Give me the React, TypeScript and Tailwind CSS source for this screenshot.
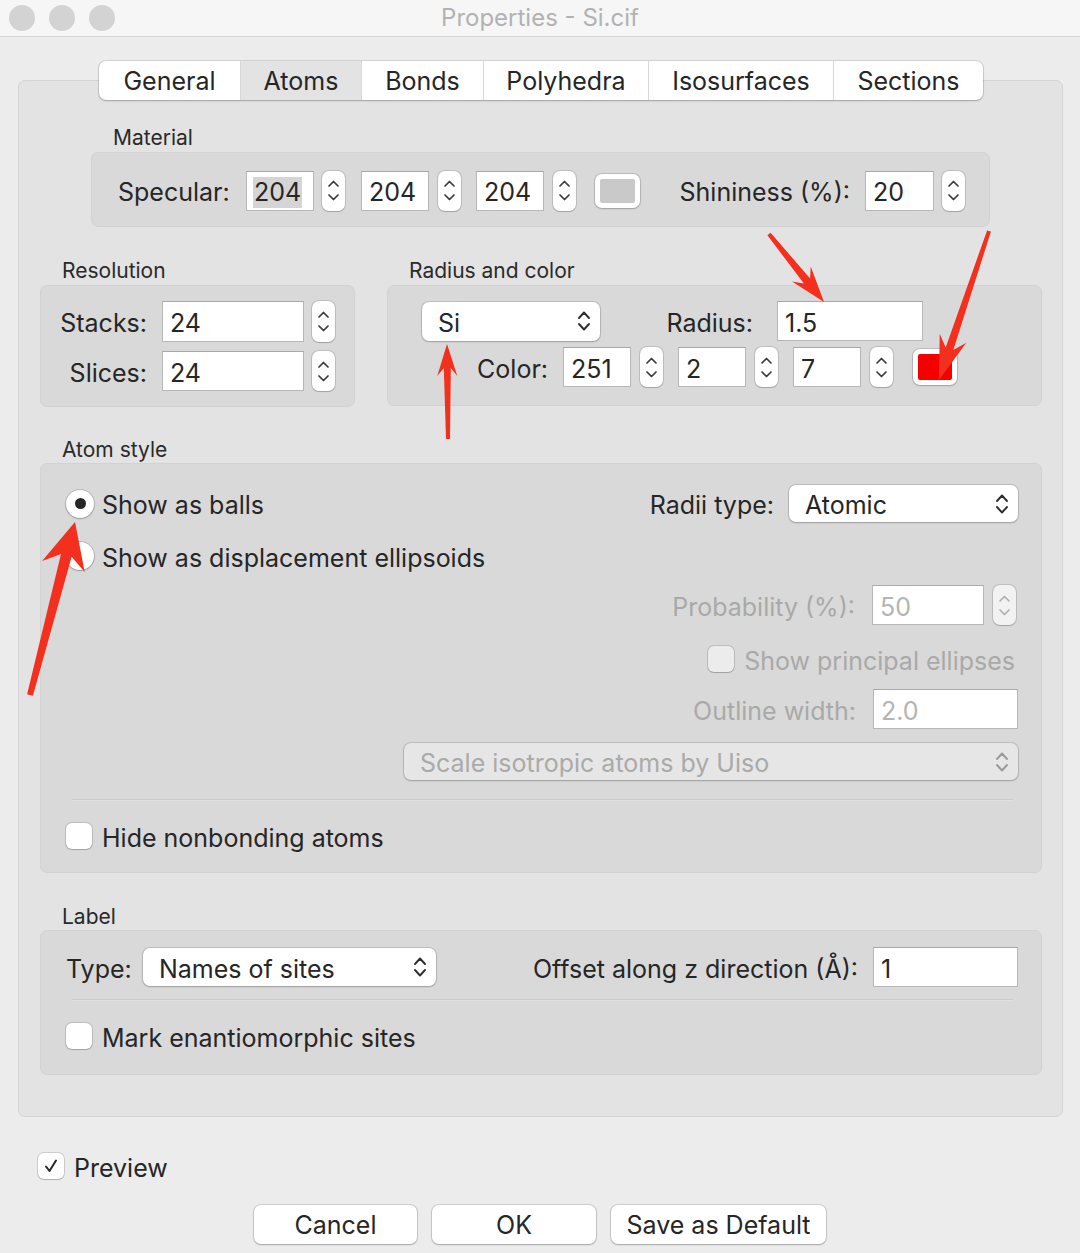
import React from "react";

type FieldProps = {
  w: number;
  h?: number;
  value: string;
  disabled?: boolean;
  selected?: boolean;
};

// 25px text, nudged down a little to sit like the system font does
const T = "text-[25px] leading-none pt-[4px]";

const Chevron = ({ up }: { up?: boolean }) => (
  <svg width="11" height="7" viewBox="0 0 11 7" fill="none">
    <path
      d={up ? "M1 6 L5.5 1.5 L10 6" : "M1 1 L5.5 5.5 L10 1"}
      stroke="currentColor"
      strokeWidth="1.7"
      strokeLinecap="round"
      strokeLinejoin="round"
    />
  </svg>
);

const Stepper = ({ h = 40, disabled }: { h?: number; disabled?: boolean }) => (
  <div
    className={`flex flex-col items-center justify-center gap-[7px] rounded-[7px] w-[23px] shadow-[0_0_0_1px_rgba(0,0,0,0.12),0_1px_1px_rgba(0,0,0,0.15)] ${
      disabled ? "bg-[#f2f2f2] text-[#b0b0b0]" : "bg-white text-[#3a3a3a]"
    }`}
    style={{ height: h }}
  >
    <Chevron up />
    <Chevron />
  </div>
);

const Field = ({ w, h = 40, value, disabled, selected }: FieldProps) => (
  <div
    className={`flex items-center bg-white border border-[#b7b7b7] border-t-[#a9a9a9] pl-[6px] ${T} ${
      disabled ? "text-[#b4b4b4]" : "text-[#262626]"
    }`}
    style={{ width: w, height: h }}
  >
    <span className={selected ? "bg-[#d5d5d5] px-[1px] py-[3px]" : "px-[1px]"}>{value}</span>
  </div>
);

const Popup = ({ w, h = 38, value, disabled }: FieldProps) => (
  <div
    className={`flex items-center justify-between rounded-[7px] pl-[16px] pr-[9px] text-[25px] leading-none shadow-[0_0_0_1px_rgba(0,0,0,0.12),0_1px_2px_rgba(0,0,0,0.18)] ${
      disabled ? "bg-[#e6e6e6] text-[#aaaaaa]" : "bg-white text-[#262626]"
    }`}
    style={{ width: w, height: h }}
  >
    <span className="pt-[4px]">{value}</span>
    <svg width="14" height="24" viewBox="0 0 14 24" fill="none" className={disabled ? "text-[#9a9a9a]" : "text-[#2e2e2e]"}>
      <path d="M2 9 L7 3.5 L12 9" stroke="currentColor" strokeWidth="1.9" strokeLinecap="round" strokeLinejoin="round" />
      <path d="M2 15 L7 20.5 L12 15" stroke="currentColor" strokeWidth="1.9" strokeLinecap="round" strokeLinejoin="round" />
    </svg>
  </div>
);

const Checkbox = ({ checked, disabled }: { checked?: boolean; disabled?: boolean }) => (
  <div
    className={`flex items-center justify-center w-[26px] h-[26px] rounded-[6px] shadow-[0_0_0_1px_rgba(0,0,0,0.13),0_1px_1px_rgba(0,0,0,0.15)] ${
      disabled ? "bg-[#ececec]" : "bg-white"
    }`}
  >
    {checked && (
      <svg width="16" height="16" viewBox="0 0 16 16" fill="none">
        <path d="M3 8.5 L6.5 13 L13 2.5" stroke="#262626" strokeWidth="2" strokeLinecap="round" strokeLinejoin="round" />
      </svg>
    )}
  </div>
);

const Radio = ({ on }: { on?: boolean }) => (
  <div className="flex items-center justify-center w-[28px] h-[28px] rounded-full bg-white shadow-[0_0_0_1px_rgba(0,0,0,0.14),0_1px_2px_rgba(0,0,0,0.2)]">
    {on && <div className="w-[11px] h-[11px] rounded-full bg-[#262626]" />}
  </div>
);

const Well = ({ color, w, h }: { color: string; w: number; h: number }) => (
  <div
    className="flex items-stretch rounded-[7px] bg-white p-[5px] shadow-[0_0_0_1px_rgba(0,0,0,0.13),0_1px_2px_rgba(0,0,0,0.16)]"
    style={{ width: w, height: h }}
  >
    <div className="flex-1 rounded-[2px]" style={{ background: color }} />
  </div>
);

const Group = ({ className, children }: { className: string; children: React.ReactNode }) => (
  <div className={`rounded-[7px] border border-[#d2d2d2] bg-[#d9d9d9] ${className}`}>{children}</div>
);

const Caption = ({ text, pl }: { text: string; pl: string }) => (
  <div className={`h-[26px] text-[21px] leading-[26px] pt-[1px] text-[#2a2a2a] ${pl}`}>{text}</div>
);

const Separator = () => (
  <div className="ml-[31px] w-[941px] h-[2px] border-t border-[#cbcbcb] border-b border-b-[#e0e0e0]" />
);

type Pt = [number, number];

const arrowPoints = (tail: Pt, tip: Pt, tw: number, sw: number, hl: number, hw: number) => {
  const [x1, y1] = tail;
  const [x2, y2] = tip;
  const L = Math.hypot(x2 - x1, y2 - y1);
  const ux = (x2 - x1) / L;
  const uy = (y2 - y1) / L;
  const px = -uy;
  const py = ux;
  const bx = x2 - ux * hl;
  const by = y2 - uy * hl;
  const jx = bx + ux * hl * 0.25;
  const jy = by + uy * hl * 0.25;
  const p = (x: number, y: number) => `${x.toFixed(1)},${y.toFixed(1)}`;
  return [
    p(x1 + (px * tw) / 2, y1 + (py * tw) / 2),
    p(jx + (px * sw) / 2, jy + (py * sw) / 2),
    p(bx + (px * hw) / 2, by + (py * hw) / 2),
    p(x2, y2),
    p(bx - (px * hw) / 2, by - (py * hw) / 2),
    p(jx - (px * sw) / 2, jy - (py * sw) / 2),
    p(x1 - (px * tw) / 2, y1 - (py * tw) / 2),
  ].join(" ");
};

const Arrows = () => (
  <svg className="absolute inset-0 pointer-events-none" width="1080" height="1253" viewBox="0 0 1080 1253">
    <g fill="#f3301d">
      <polygon points={arrowPoints([769, 234], [824, 302], 4, 8, 36, 24)} />
      <polygon points={arrowPoints([989, 231], [939, 380], 4, 8, 44, 28)} />
      <polygon points={arrowPoints([448, 439], [447, 344], 4, 7, 32, 20)} />
      <polygon points={arrowPoints([30, 695], [75, 522], 6, 11, 46, 44)} />
    </g>
  </svg>
);

const tabs = [
  { name: "General", w: 141 },
  { name: "Atoms", w: 121, on: true },
  { name: "Bonds", w: 122 },
  { name: "Polyhedra", w: 165 },
  { name: "Isosurfaces", w: 185 },
  { name: "Sections", w: 150 },
];

export default function App() {
  return (
    <div className="relative w-[1080px] h-[1253px] overflow-hidden bg-[#ececec] text-[#262626] font-['Inter','Liberation_Sans',sans-serif]">
      {/* title bar */}
      <div className="grid grid-cols-[1fr_auto_1fr] items-center h-[37px] bg-[#f6f6f6] border-b border-[#d6d6d6]">
        <div className="flex items-center gap-[14px] pl-[9px]">
          <div className="w-[26px] h-[26px] rounded-full bg-[#d3d3d3]" />
          <div className="w-[26px] h-[26px] rounded-full bg-[#d3d3d3]" />
          <div className="w-[26px] h-[26px] rounded-full bg-[#d3d3d3]" />
        </div>
        <div className="text-[24px] leading-none text-[#b2b2b2]">Properties - Si.cif</div>
        <div />
      </div>

      {/* tab view */}
      <div className="ml-[18px] mt-[43px] w-[1045px] h-[1037px] rounded-[7px] border border-[#d4d4d4] bg-[#e3e3e3] flex flex-col">
        <div className="-mt-[20px] ml-[80px] flex h-[39px] w-[884px] rounded-[7px] bg-white overflow-hidden shadow-[0_0_0_1px_rgba(0,0,0,0.1),0_1px_2px_rgba(0,0,0,0.2)]">
          {tabs.map((t, i) => (
            <div
              key={t.name}
              className={`flex items-center justify-center text-[25px] leading-none pt-[2px] ${i > 0 ? "border-l border-[#d8d8d8]" : ""} ${
                t.on ? "bg-[#e3e3e3]" : ""
              }`}
              style={{ width: t.w }}
            >
              {t.name}
            </div>
          ))}
        </div>

        {/* Material */}
        <div className="mt-[24px]">
          <Caption text="Material" pl="pl-[94px]" />
        </div>
        <Group className="mt-[2px] ml-[72px] w-[899px] h-[75px] flex items-center pl-[26px] pt-[2px]">
          <div className={`w-[128px] ${T}`}>Specular:</div>
          <Field w={68} value="204" selected />
          <div className="ml-[8px]"><Stepper /></div>
          <div className="ml-[16px]"><Field w={68} value="204" /></div>
          <div className="ml-[9px]"><Stepper /></div>
          <div className="ml-[15px]"><Field w={68} value="204" /></div>
          <div className="ml-[9px]"><Stepper /></div>
          <div className="ml-[19px]"><Well color="#c9c9c9" w={45} h={34} /></div>
          <div className={`w-[225px] pr-[15px] text-right ${T}`}>Shininess (%):</div>
          <Field w={69} value="20" />
          <div className="ml-[8px]"><Stepper /></div>
        </Group>

        {/* Resolution + Radius and color */}
        <div className="mt-[30px] flex">
          <div className="ml-[21px] w-[315px]">
            <Caption text="Resolution" pl="pl-[22px]" />
            <Group className="mt-[2px] h-[122px] pt-[15px]">
              <div className="flex items-center h-[41px]">
                <div className={`w-[106px] text-right ${T}`}>Stacks:</div>
                <div className="ml-[15px]"><Field w={142} h={41} value="24" /></div>
                <div className="ml-[8px]"><Stepper h={41} /></div>
              </div>
              <div className="mt-[9px] flex items-center h-[40px]">
                <div className={`w-[106px] text-right ${T}`}>Slices:</div>
                <div className="ml-[15px]"><Field w={142} h={40} value="24" /></div>
                <div className="ml-[8px]"><Stepper h={40} /></div>
              </div>
            </Group>
          </div>
          <div className="ml-[32px] w-[655px]">
            <Caption text="Radius and color" pl="pl-[22px]" />
            <Group className="mt-[2px] h-[121px] pt-[15px]">
              <div className="flex items-center h-[40px]">
                <div className="ml-[34px]"><Popup w={178} h={39} value="Si" /></div>
                <div className={`w-[177px] pr-[24px] text-right ${T}`}>Radius:</div>
                <Field w={146} value="1.5" />
              </div>
              <div className="mt-[6px] flex items-center h-[40px]">
                <div className={`w-[175px] pr-[15px] text-right ${T}`}>Color:</div>
                <Field w={68} value="251" />
                <div className="ml-[9px]"><Stepper /></div>
                <div className="ml-[15px]"><Field w={68} value="2" /></div>
                <div className="ml-[9px]"><Stepper /></div>
                <div className="ml-[15px]"><Field w={68} value="7" /></div>
                <div className="ml-[9px]"><Stepper /></div>
                <div className="ml-[20px]"><Well color="#f50000" w={44} h={36} /></div>
              </div>
            </Group>
          </div>
        </div>

        {/* Atom style */}
        <div className="mt-[29px]">
          <Caption text="Atom style" pl="pl-[43px]" />
        </div>
        <Group className="mt-[1px] ml-[21px] w-[1002px] h-[410px] flex flex-col">
          <div className="mt-[21px] h-[37px] flex items-center">
            <div className="ml-[25px]"><Radio on /></div>
            <div className={`ml-[8px] ${T}`}>Show as balls</div>
            <div className="flex-1" />
            <div className={T}>Radii type:</div>
            <div className="ml-[15px] mr-[23px]"><Popup w={229} h={37} value="Atomic" /></div>
          </div>
          <div className="mt-[19px] h-[30px] flex items-center">
            <div className="ml-[25px]"><Radio /></div>
            <div className={`ml-[8px] ${T}`}>Show as displacement ellipsoids</div>
          </div>
          <div className="mt-[14px] h-[40px] flex items-center justify-end pr-[25px]">
            <div className={`${T} text-[#a9a9a9]`}>Probability (%):</div>
            <div className="ml-[17px]"><Field w={112} value="50" disabled /></div>
            <div className="ml-[9px]"><Stepper disabled /></div>
          </div>
          <div className="mt-[19px] h-[30px] flex items-center justify-end pr-[26px]">
            <Checkbox disabled />
            <div className={`ml-[10px] ${T} text-[#a9a9a9]`}>Show principal ellipses</div>
          </div>
          <div className="mt-[15px] h-[40px] flex items-center justify-end pr-[23px]">
            <div className={`${T} text-[#a9a9a9]`}>Outline width:</div>
            <div className="ml-[17px]"><Field w={145} value="2.0" disabled /></div>
          </div>
          <div className="mt-[14px] ml-[363px]">
            <Popup w={614} h={37} value="Scale isotropic atoms by Uiso" disabled />
          </div>
          <div className="mt-[19px]"><Separator /></div>
          <div className="mt-[22px] h-[26px] flex items-center">
            <div className="ml-[25px]"><Checkbox /></div>
            <div className={`ml-[10px] ${T}`}>Hide nonbonding atoms</div>
          </div>
        </Group>

        {/* Label */}
        <div className="mt-[30px]">
          <Caption text="Label" pl="pl-[43px]" />
        </div>
        <Group className="mt-[1px] ml-[21px] w-[1002px] h-[145px] flex flex-col">
          <div className="mt-[16px] h-[40px] flex items-center">
            <div className={`ml-[25px] w-[77px] ${T}`}>Type:</div>
            <Popup w={293} h={38} value="Names of sites" />
            <div className="flex-1" />
            <div className={T}>Offset along z direction (Å):</div>
            <div className="ml-[15px] mr-[23px]"><Field w={145} value="1" /></div>
          </div>
          <div className="mt-[12px]"><Separator /></div>
          <div className="mt-[22px] h-[26px] flex items-center">
            <div className="ml-[25px]"><Checkbox /></div>
            <div className={`ml-[10px] ${T}`}>Mark enantiomorphic sites</div>
          </div>
        </Group>
      </div>

      {/* footer */}
      <div className="mt-[36px] h-[26px] flex items-center">
        <div className="ml-[38px]"><Checkbox checked /></div>
        <div className={`ml-[10px] ${T}`}>Preview</div>
      </div>
      <div className="mt-[26px] flex">
        {[
          { t: "Cancel", w: 163, ml: "ml-[254px]" },
          { t: "OK", w: 164, ml: "ml-[15px]" },
          { t: "Save as Default", w: 215, ml: "ml-[15px]" },
        ].map((b) => (
          <div
            key={b.t}
            className={`${b.ml} h-[39px] flex items-center justify-center rounded-[7px] bg-white text-[25px] leading-none pt-[2px] shadow-[0_0_0_1px_rgba(0,0,0,0.12),0_1px_2px_rgba(0,0,0,0.2)]`}
            style={{ width: b.w }}
          >
            {b.t}
          </div>
        ))}
      </div>

      <Arrows />
    </div>
  );
}
